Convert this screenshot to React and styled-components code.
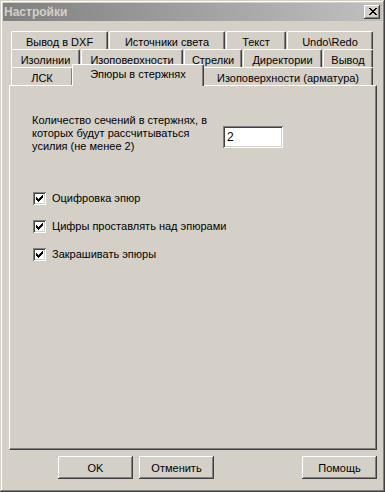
import React from 'react'
import styled, { createGlobalStyle } from 'styled-components'

const GlobalStyle = createGlobalStyle`
  html, body {
    margin: 0;
    padding: 0;
    background: #d4d0c8;
  }
  body {
    font-family: "Liberation Sans", Arial, sans-serif;
    font-size: 11px;
    color: #000;
  }
`

const tabRows = [
  [
    { label: 'Вывод в DXF', w: 98 },
    { label: 'Источники света', w: 117 },
    { label: 'Текст', w: 61 },
    { label: 'Undo\\Redo', w: 87 },
  ],
  [
    { label: 'Изолинии', w: 70 },
    { label: 'Изоповерхности', w: 103 },
    { label: 'Стрелки', w: 59 },
    { label: 'Директории', w: 80 },
    { label: 'Вывод', w: 51 },
  ],
  [
    { label: 'ЛСК', w: 63 },
    { label: 'Эпюры в стержнях', w: 129, active: true },
    { label: 'Изоповерхности (арматура)', w: 171 },
  ],
]

const checks = [
  'Оцифровка эпюр',
  'Цифры проставлять над эпюрами',
  'Закрашивать эпюры',
]

// classic 7x7 check glyph
const checkPixels = [
  [[6, 6]],
  [[5, 6]],
  [[0, 0], [4, 6]],
  [[0, 1], [3, 5]],
  [[0, 4]],
  [[1, 3]],
  [[2, 2]],
]

const CheckMark = () => (
  <svg width="13" height="13" viewBox="0 0 13 13" shapeRendering="crispEdges">
    {checkPixels.map((row, y) =>
      row.map(([a, b]) => (
        <rect key={y + '-' + a} x={3 + a} y={3 + y} width={b - a + 1} height="1" fill="#000" />
      ))
    )}
  </svg>
)

const CloseGlyph = () => (
  <svg width="8" height="7" viewBox="0 0 8 7" shapeRendering="crispEdges">
    <path d="M0 0h2v1h-2zM6 0h2v1h-2zM1 1h2v1h-2zM5 1h2v1h-2zM2 2h4v1h-4zM3 3h2v1h-2zM2 4h4v1h-4zM1 5h2v1h-2zM5 5h2v1h-2zM0 6h2v1h-2zM6 6h2v1h-2z" fill="#000" />
  </svg>
)

const App = () => {
  return (
    <>
      <GlobalStyle />
      <Window>
        <TitleBar>
          <Title>Настройки</Title>
          <CloseButton>
            <CloseGlyph />
          </CloseButton>
        </TitleBar>
        <Body>
          <Tabs>
            {tabRows.map((row, i) => (
              <TabRow key={i}>
                {row.map(tab => (
                  <Tab key={tab.label} $w={tab.w} $active={tab.active}>
                    {tab.label}
                  </Tab>
                ))}
              </TabRow>
            ))}
          </Tabs>
          <Panel>
            <SectionRow>
              <Label>
                Количество сечений в стержнях, в
                <br />
                которых будут рассчитываться
                <br />
                усилия (не менее 2)
              </Label>
              <Field>2</Field>
            </SectionRow>
            <CheckList>
              {checks.map(text => (
                <CheckRow key={text}>
                  <CheckBox>
                    <CheckMark />
                  </CheckBox>
                  <span>{text}</span>
                </CheckRow>
              ))}
            </CheckList>
          </Panel>
          <Buttons>
            <Button>OK</Button>
            <Button>Отменить</Button>
            <Button $push>Помощь</Button>
          </Buttons>
        </Body>
      </Window>
    </>
  )
}

export default App

const Window = styled.div`
  width: 385px;
  height: 492px;
  box-sizing: border-box;
  padding: 3px;
  background: #d4d0c8;
  display: flex;
  flex-direction: column;
  box-shadow: inset -1px -1px #404040, inset 1px 1px #d4d0c8,
    inset -2px -2px #808080, inset 2px 2px #fff;
`

const TitleBar = styled.div`
  height: 18px;
  display: flex;
  align-items: center;
  justify-content: space-between;
  padding: 0 2px 0 1px;
  background: linear-gradient(to right, #808080, #c0c0c0);
`

const Title = styled.span`
  font-weight: bold;
  font-size: 12px;
  color: #d4d0c8;
`

const CloseButton = styled.div`
  width: 16px;
  height: 14px;
  box-sizing: border-box;
  display: flex;
  align-items: center;
  justify-content: center;
  padding: 0 0 1px 1px;
  background: #d4d0c8;
  box-shadow: inset -1px -1px #404040, inset 1px 1px #fff,
    inset -2px -2px #808080;
`

const Body = styled.div`
  flex: 1;
  display: flex;
  flex-direction: column;
  padding: 10px 5px 10px 6px;
`

const Tabs = styled.div`
  display: flex;
  flex-direction: column;
  padding: 0 3px 0 2px;
`

const TabRow = styled.div`
  height: 18px;
  display: flex;
  align-items: flex-end;
`

const Tab = styled.div`
  flex: none;
  width: ${p => p.$w - 1}px;
  margin-right: 1px;
  height: 18px;
  box-sizing: border-box;
  padding-top: 3px;
  line-height: 14px;
  text-align: center;
  white-space: nowrap;
  background: #d4d0c8;
  border-top: 1px solid #fff;
  border-left: 1px solid #fff;
  border-right: 1px solid #404040;
  border-radius: 2px 2px 0 0;
  box-shadow: inset -1px 0 #808080;

  ${p =>
    p.$active &&
    `
    position: relative;
    z-index: 1;
    width: ${p.$w + 3}px;
    margin: 0 -1px -1px -2px;
    height: 22px;
    padding-top: 2px;
  `}
`

const Panel = styled.div`
  flex: 1;
  box-sizing: border-box;
  padding: 28px 0 0 22px;
  border-top: 1px solid #fff;
  border-left: 1px solid #fff;
  border-right: 1px solid #404040;
  border-bottom: 1px solid #404040;
  box-shadow: inset -1px -1px #808080;
`

const SectionRow = styled.div`
  display: flex;
  align-items: flex-start;
`

const Label = styled.div`
  width: 191px;
  line-height: 13px;
`

const Field = styled.div`
  width: 60px;
  height: 22px;
  box-sizing: border-box;
  margin-top: 12px;
  padding: 3px 0 0 4px;
  font-size: 12px;
  line-height: 16px;
  background: #fff;
  box-shadow: inset 1px 1px #808080, inset -1px -1px #fff,
    inset 2px 2px #404040, inset -2px -2px #d4d0c8;
`

const CheckList = styled.div`
  display: flex;
  flex-direction: column;
  gap: 15px;
  margin-top: 39px;
  padding-left: 1px;
`

const CheckRow = styled.div`
  display: flex;
  align-items: center;
  gap: 6px;
  height: 13px;
  line-height: 13px;
`

const CheckBox = styled.span`
  width: 13px;
  height: 13px;
  flex: none;
  background: #fff;
  box-shadow: inset 1px 1px #808080, inset -1px -1px #fff,
    inset 2px 2px #404040, inset -2px -2px #d4d0c8;
  svg {
    display: block;
  }
`

const Buttons = styled.div`
  display: flex;
  gap: 6px;
  margin-top: 6px;
  padding-left: 49px;
`

const Button = styled.div`
  width: 75px;
  height: 23px;
  box-sizing: border-box;
  display: flex;
  align-items: center;
  justify-content: center;
  background: #d4d0c8;
  box-shadow: inset -1px -1px #404040, inset 1px 1px #fff,
    inset -2px -2px #808080;
  margin-left: ${p => (p.$push ? 'auto' : '0')};
`
